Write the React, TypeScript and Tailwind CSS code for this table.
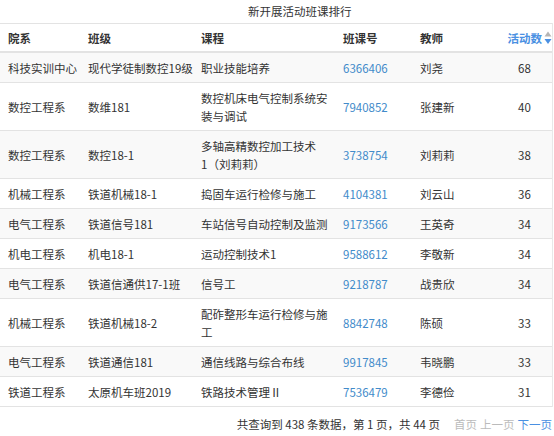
import type { ReactNode } from "react";

type Row = {
  dept: string;
  cls: string;
  course: ReactNode;
  code: string;
  teacher: string;
  count: number;
};

const ROWS: Row[] = [
  { dept: "科技实训中心", cls: "现代学徒制数控19级", course: "职业技能培养", code: "6366406", teacher: "刘尧", count: 68 },
  {
    dept: "数控工程系",
    cls: "数维181",
    course: (
      <>
        数控机床电气控制系统安
        <br />
        装与调试
      </>
    ),
    code: "7940852",
    teacher: "张建新",
    count: 40,
  },
  {
    dept: "数控工程系",
    cls: "数控18-1",
    course: (
      <>
        多轴高精数控加工技术
        <br />
        1（刘莉莉）
      </>
    ),
    code: "3738754",
    teacher: "刘莉莉",
    count: 38,
  },
  { dept: "机械工程系", cls: "铁道机械18-1", course: "捣固车运行检修与施工", code: "4104381", teacher: "刘云山", count: 36 },
  { dept: "电气工程系", cls: "铁道信号181", course: "车站信号自动控制及监测", code: "9173566", teacher: "王英奇", count: 34 },
  { dept: "机电工程系", cls: "机电18-1", course: "运动控制技术1", code: "9588612", teacher: "李敬新", count: 34 },
  { dept: "电气工程系", cls: "铁道信通供17-1班", course: "信号工", code: "9218787", teacher: "战贵欣", count: 34 },
  {
    dept: "机械工程系",
    cls: "铁道机械18-2",
    course: (
      <>
        配砟整形车运行检修与施
        <br />工
      </>
    ),
    code: "8842748",
    teacher: "陈硕",
    count: 33,
  },
  { dept: "电气工程系", cls: "铁道通信181", course: "通信线路与综合布线", code: "9917845", teacher: "韦晓鹏", count: 33 },
  { dept: "铁道工程系", cls: "太原机车班2019", course: "铁路技术管理Ⅱ", code: "7536479", teacher: "李德俭", count: 31 },
];

function SortIcon() {
  return (
    <svg width="8" height="14" viewBox="0 0 8 14" className="ml-[2px] inline-block">
      <path d="M4 0.5 L7.5 5.5 L0.5 5.5 Z" fill="#b5b5b5" />
      <path d="M0.5 8 L7.5 8 L4 13 Z" fill="#4a90e2" />
    </svg>
  );
}

export default function App() {
  return (
    <div
      className="w-[554px] h-[436px] bg-white text-[#333] text-[11.5px] leading-[18px]"
      style={{ fontFamily: '"Noto Sans CJK SC", "Noto Sans", sans-serif' }}
    >
      <div className="h-[23px] leading-[23px] pl-[248px]">新开展活动班课排行</div>

      <div className="w-[553px] border-r border-[#e8e8e8]">
        <table className="w-full table-fixed border-collapse">
          <colgroup>
            <col className="w-[80px]" />
            <col className="w-[113px]" />
            <col className="w-[142px]" />
            <col className="w-[77px]" />
            <col className="w-[85px]" />
            <col />
          </colgroup>
          <thead>
            <tr className="border-t border-[#e3e3e3] border-b-2 border-b-[#e3e3e3] font-bold text-left">
              <th className="pl-2 py-[4.5px] font-bold">院系</th>
              <th className="pl-2 py-[4.5px] font-bold">班级</th>
              <th className="pl-2 py-[4.5px] font-bold">课程</th>
              <th className="pl-2 py-[4.5px] font-bold">班课号</th>
              <th className="pl-2 py-[4.5px] font-bold">教师</th>
              <th className="py-[4.5px] text-right font-bold text-[#4a90e2] whitespace-nowrap">
                <span className="inline-flex items-center">
                  活动数
                  <SortIcon />
                </span>
              </th>
            </tr>
          </thead>
          <tbody>
            {ROWS.map((r, i) => (
              <tr
                key={r.code}
                className={
                  "border-b border-[#e3e3e3] " + (i % 2 === 0 ? "bg-[#f9f9f9]" : "bg-white")
                }
              >
                <td className="pl-2 py-[5.5px] align-middle whitespace-nowrap">{r.dept}</td>
                <td className="pl-2 py-[5.5px] align-middle whitespace-nowrap">{r.cls}</td>
                <td className="pl-2 py-[5.5px] align-middle whitespace-nowrap">{r.course}</td>
                <td className="pl-2 py-[5.5px] align-middle text-[#428bca]">{r.code}</td>
                <td className="pl-2 py-[5.5px] align-middle">{r.teacher}</td>
                <td className="py-[5.5px] align-middle text-center">{r.count}</td>
              </tr>
            ))}
          </tbody>
        </table>
      </div>

      <div className="mt-2 flex justify-end items-center pr-[2px] whitespace-nowrap">
        <span>共查询到 438 条数据，第 1 页，共 44 页</span>
        <span className="ml-[14px] flex gap-[3px]">
          <span className="text-[#bbbbbb]">首页</span>
          <span className="text-[#bbbbbb]">上一页</span>
          <span className="text-[#4a90e2]">下一页</span>
        </span>
      </div>
    </div>
  );
}
